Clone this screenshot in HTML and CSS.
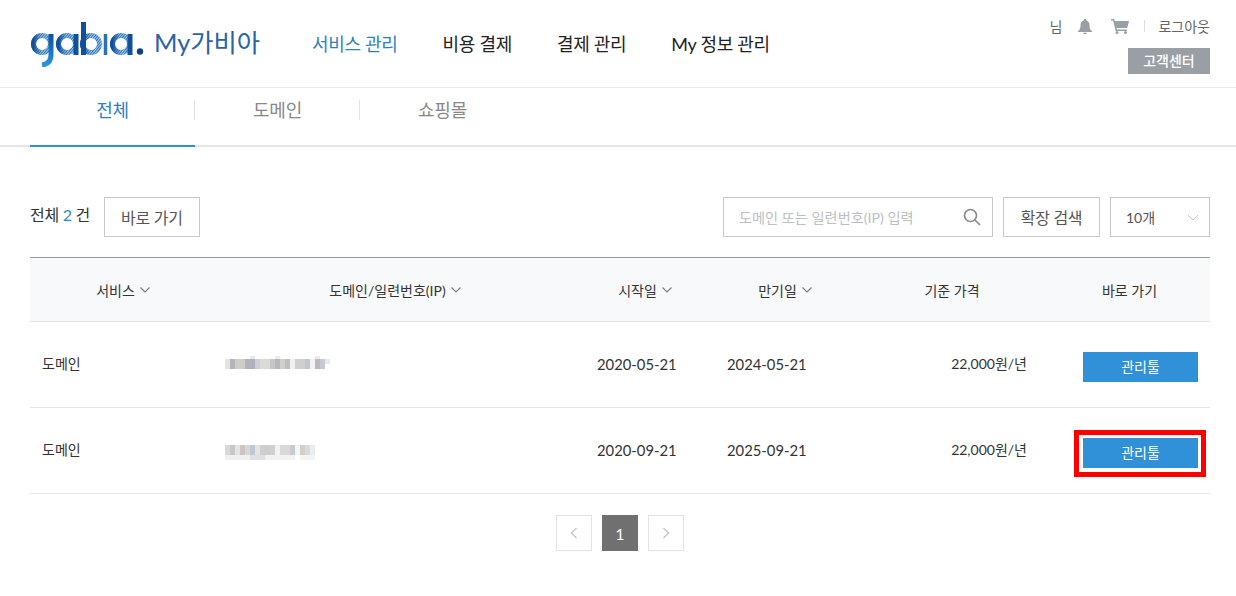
FILE: index.html
```html
<!DOCTYPE html>
<html lang="ko">
<head>
<meta charset="utf-8">
<title>My가비아</title>
<link rel="stylesheet" href="styles.css">
</head>
<body>
<header class="header">
  <div class="brand">
    <svg class="logo" width="114" height="46" viewBox="0 0 114 46" aria-label="gabia">
      <defs>
        <pattern id="weave" width="2" height="2" patternUnits="userSpaceOnUse" patternTransform="rotate(40)">
          <rect width="2" height="2" fill="#2a72b8"/>
          <rect width="1" height="2" fill="#a8cdec"/>
        </pattern>
        <linearGradient id="ringFade" x1="0" y1="0" x2="1" y2="0">
          <stop offset="0" stop-color="#0f4f9c"/>
          <stop offset=".45" stop-color="#0f4f9c" stop-opacity="0"/>
        </linearGradient>
        <linearGradient id="tail" x1="0" y1="0" x2="0" y2="1">
          <stop offset="0" stop-color="#0f4f9c"/>
          <stop offset="1" stop-color="#2b93d8"/>
        </linearGradient>
      </defs>
      <g fill="none" stroke-width="5">
        <g stroke="url(#weave)">
          <circle cx="12" cy="23" r="8.500"/>
          <circle cx="37" cy="23" r="8.500"/>
          <circle cx="61" cy="23" r="8.500"/>
          <circle cx="91" cy="23" r="8.500"/>
        </g>
        <g stroke="url(#ringFade)">
          <circle cx="12" cy="23" r="8.500"/>
          <circle cx="37" cy="23" r="8.500"/>
          <circle cx="61" cy="23" r="8.500"/>
          <circle cx="91" cy="23" r="8.500"/>
        </g>
        <path d="M21 13V34Q21 43 12 44" stroke="url(#tail)"/>
        <path d="M46 13V34" stroke="#0f4f9c"/>
        <path d="M53.500 1V34" stroke="#0f4f9c"/>
        <path d="M75.500 13V34" stroke="#2a72b8" stroke-width="3.500"/>
        <path d="M100 13V34" stroke="#0f4f9c"/>
      </g>
      <circle cx="110" cy="30.500" r="3.200" fill="#103f84"/>
    </svg>
    <span class="brand-name">My가비아</span>
  </div>
  <nav class="nav">
    <a class="nav-item nav-item-active">서비스 관리</a>
    <a class="nav-item">비용 결제</a>
    <a class="nav-item">결제 관리</a>
    <a class="nav-item">My 정보 관리</a>
  </nav>
  <div class="util">
    <div class="util-top">
      <span class="util-user">님</span>
      <svg class="icon-bell" width="14" height="15" viewBox="0 0 14 15"><path d="M7 0a1.300 1.300 0 0 1 1.300 1.500C10.500 2.200 11.500 4 11.500 6.500c0 3 .8 4.500 2.500 5.700V13H0v-.8C1.700 11 2.500 9.500 2.500 6.500 2.500 4 3.500 2.200 5.700 1.500A1.300 1.300 0 0 1 7 0zM5 13.700h4A2 1.400 0 0 1 5 13.700z" fill="#9a9ea5"/></svg>
      <svg class="icon-cart" width="18" height="15" viewBox="0 0 18 15"><path d="M0 0h3.200l.6 2H18l-1.800 7H5.600l.4 1.500h10V12H4.700L2.100 1.500H0z" fill="#9a9ea5"/><circle cx="6" cy="13.500" r="1.500" fill="#9a9ea5"/><circle cx="14.500" cy="13.500" r="1.500" fill="#9a9ea5"/></svg>
      <span class="util-sep"></span>
      <a class="util-logout">로그아웃</a>
    </div>
    <a class="support">고객센터</a>
  </div>
</header>

<div class="tabs">
  <a class="tab tab-active">전체</a>
  <a class="tab">도메인</a>
  <a class="tab tab-last">쇼핑몰</a>
</div>

<main class="main">
  <div class="toolbar">
    <div class="count">전체 <b class="count-num">2</b> 건</div>
    <button class="btn btn-go">바로 가기</button>
    <div class="search">
      <span class="search-text">도메인 또는 일련번호(IP) 입력</span>
      <svg width="18" height="18" viewBox="0 0 18 18" fill="none" stroke="#8a8a8a" stroke-width="1.700"><circle cx="7.500" cy="7.500" r="6"/><path d="M12 12l5 5"/></svg>
    </div>
    <button class="btn btn-adv">확장 검색</button>
    <div class="select">
      <span>10개</span>
      <svg width="12" height="7" viewBox="0 0 12 7" fill="none" stroke="#c4c7cc" stroke-width="1"><path d="M1 1l5 5 5-5"/></svg>
    </div>
  </div>

  <div class="table">
    <div class="row row-head">
      <div class="th th-service">서비스<svg class="sort" width="10" height="6" viewBox="0 0 10 6"><path d="M.5.500L5 5 9.500.500"/></svg></div>
      <div class="th">도메인/일련번호(IP)<svg class="sort" width="10" height="6" viewBox="0 0 10 6"><path d="M.5.500L5 5 9.500.500"/></svg></div>
      <div class="th">시작일<svg class="sort" width="10" height="6" viewBox="0 0 10 6"><path d="M.5.500L5 5 9.500.500"/></svg></div>
      <div class="th">만기일<svg class="sort" width="10" height="6" viewBox="0 0 10 6"><path d="M.5.500L5 5 9.500.500"/></svg></div>
      <div class="th">기준 가격</div>
      <div class="th th-last">바로 가기</div>
    </div>
    <div class="row">
      <div class="td td-service">도메인</div>
      <div class="td">
        <svg class="blur" width="105" height="15" viewBox="0 0 105 15">
          <g fill="#d9d8d4"><rect y="3" width="5" height="10" fill="#e4e3df"/><rect x="5" y="3" width="5" height="10" fill="#b3b5ba"/><rect x="10" y="3" width="10" height="10" fill="#cfcdc9"/><rect x="20" y="3" width="5" height="10" fill="#b5b4b2"/><rect x="25" y="3" width="5" height="10" fill="#aeb2c0"/><rect x="30" y="3" width="5" height="10" fill="#cdd0d4"/><rect x="35" y="3" width="10" height="10" fill="#dcdad6"/><rect x="45" y="3" width="5" height="10" fill="#c4c6c8"/><rect x="50" y="3" width="5" height="10" fill="#b4b7bc"/><rect x="55" y="3" width="5" height="10" fill="#ced0d0"/><rect x="60" y="3" width="5" height="10" fill="#c2bfba"/><rect x="65" y="3" width="5" height="10" fill="#eef1f4"/><rect x="70" y="3" width="10" height="10" fill="#cfcfd0"/><rect x="80" y="3" width="5" height="10" fill="#c3c6cb"/><rect x="85" y="3" width="5" height="10" fill="#f3f3f3"/><rect x="90" y="3" width="5" height="10" fill="#bfb5ba"/><rect x="95" y="3" width="5" height="10" fill="#c6cad0"/><rect x="100" y="3" width="5" height="5" fill="#e4eaf0"/><rect x="25" width="5" height="3" fill="#e8e8ee"/><rect x="50" width="5" height="3" fill="#ececec"/><rect x="90" width="5" height="3" fill="#eee8ea"/></g>
        </svg>
      </div>
      <div class="td td-start">2020-05-21</div>
      <div class="td td-end">2024-05-21</div>
      <div class="td td-price">22,000원/년</div>
      <div class="td td-action"><button class="tool">관리툴</button></div>
    </div>
    <div class="row">
      <div class="td td-service">도메인</div>
      <div class="td">
        <svg class="blur blur-low" width="90" height="15" viewBox="0 0 90 15">
          <g><rect width="5" height="10" fill="#d9d8d4"/><rect x="5" width="5" height="10" fill="#c8c7c3"/><rect x="10" width="5" height="10" fill="#e2e4e6"/><rect x="15" width="5" height="10" fill="#cbc5c2"/><rect x="20" width="5" height="10" fill="#dad6d0"/><rect x="25" width="5" height="10" fill="#bcc8d6"/><rect x="30" width="5" height="10" fill="#e4e4e8"/><rect x="35" width="10" height="10" fill="#cfcdd0"/><rect x="45" width="5" height="10" fill="#d2d0ce"/><rect x="50" width="5" height="10" fill="#f1f2f2"/><rect x="55" width="10" height="10" fill="#dcd8d8"/><rect x="65" width="5" height="10" fill="#c8ccd2"/><rect x="70" width="5" height="10" fill="#f3f6f8"/><rect x="75" width="5" height="10" fill="#d2cfc8"/><rect x="80" width="5" height="10" fill="#d9dbd9"/><rect x="85" width="5" height="10" fill="#e6eef2"/></g>
          <g fill="#f0f0f0"><rect y="10" width="25" height="5"/><rect x="25" y="10" width="15" height="5" fill="#e0e0e0"/><rect x="40" y="10" width="30" height="5" fill="#f2f2f4"/><rect x="75" y="10" width="15" height="5" fill="#f4f4f4"/></g>
        </svg>
      </div>
      <div class="td td-start">2020-09-21</div>
      <div class="td td-end">2025-09-21</div>
      <div class="td td-price">22,000원/년</div>
      <div class="td td-action"><button class="tool">관리툴<span class="highlight"></span></button></div>
    </div>
  </div>

  <div class="pager">
    <a class="page page-nav"><svg width="8" height="12" viewBox="0 0 8 12" fill="none" stroke="#c3c8d0" stroke-width="1.500"><path d="M6.500 1L1.500 6l5 5"/></svg></a>
    <a class="page page-current">1</a>
    <a class="page page-nav"><svg width="8" height="12" viewBox="0 0 8 12" fill="none" stroke="#c3c8d0" stroke-width="1.500"><path d="M1.500 1l5 5-5 5"/></svg></a>
  </div>
</main>
</body>
</html>
```

FILE: styles.css
```css
* { box-sizing: border-box; }

html, body { margin: 0; padding: 0; }

body {
  font-family: Lato, "Noto Sans CJK KR", "Noto Sans", sans-serif;
  color: #333;
  background: #fff;
  font-size: 14px;
}

.header {
  height: 88px;
  border-bottom: 1px solid #ebebeb;
  padding: 0 26px 0 30px;
  display: flex;
  align-items: center;
}

.brand {
  display: flex;
  align-items: center;
  gap: 10px;
  width: 282px;
}

.logo { margin-top: 1px; }

.brand-name {
  font-size: 25.300px;
  line-height: 40px;
  color: #2a64a6;
  margin-bottom: 3px;
}

.nav {
  display: flex;
  gap: 45px;
  flex: 1;
}

.nav-item {
  font-size: 18px;
  line-height: 26px;
  letter-spacing: -0.3px;
  color: #222;
}

.nav-item-active { color: #2f7fc0; }

.util {
  display: flex;
  flex-direction: column;
  align-items: flex-end;
  gap: 12px;
  margin-top: 3px;
}

.util-top {
  display: flex;
  align-items: center;
  height: 20px;
  font-size: 14px;
  color: #666;
}

.util-user { margin-right: 16px; }
.icon-bell { margin-right: 19px; }
.icon-cart { margin-right: 15px; }

.util-sep {
  width: 1px;
  height: 12px;
  background: #dcdcdc;
  margin-right: 13px;
}

.support {
  width: 82px;
  height: 26px;
  background: #9a9ea5;
  color: #fff;
  font-size: 14px;
  font-weight: 500;
  line-height: 26px;
  text-align: center;
}

.tabs {
  display: flex;
  height: 59px;
  padding: 0 26px 0 30px;
  border-bottom: 2px solid #e5e5e5;
}

.tab {
  position: relative;
  width: 165px;
  height: 59px;
  padding-top: 8px;
  font-size: 18px;
  line-height: 28px;
  letter-spacing: -0.3px;
  color: #888;
  text-align: center;
}

.tab::after {
  content: "";
  position: absolute;
  right: 0;
  top: 12px;
  width: 1px;
  height: 20px;
  background: #e2e2e2;
}

.tab-last::after { display: none; }

.tab-active {
  color: #2f7fc0;
  border-bottom: 2px solid #2f8fd8;
}

.main { padding: 50px 26px 0 30px; }

.toolbar {
  display: flex;
  align-items: center;
  height: 40px;
}

.count {
  font-size: 16px;
  line-height: 22px;
  letter-spacing: -0.3px;
  color: #333;
  margin: 0 14px 4px 0;
}

.count-num {
  font-weight: 400;
  color: #2f86cc;
}

.btn {
  height: 40px;
  background: #fff;
  border: 1px solid #c8c8c8;
  font: inherit;
  font-size: 16px;
  letter-spacing: -0.3px;
  color: #555;
  padding: 0;
}

.btn-go { width: 96px; margin-right: auto; }
.btn-adv { width: 97px; margin-right: 10px; }

.search {
  width: 270px;
  height: 40px;
  border: 1px solid #c8c8c8;
  display: flex;
  align-items: center;
  justify-content: space-between;
  padding: 0 11px 0 15px;
  margin-right: 10px;
}

.search-text {
  font-size: 14.200px;
  color: #bdc0c4;
}

.select {
  width: 100px;
  height: 40px;
  border: 1px solid #c8c8c8;
  display: flex;
  align-items: center;
  justify-content: space-between;
  padding: 0 10px 0 15px;
  font-size: 14px;
  color: #555;
}

.table {
  margin-top: 20px;
  border-top: 1px solid #999;
}

.row {
  display: grid;
  grid-template-columns: 195px 340px 160px 120px 214px 151px;
  height: 86px;
  align-items: center;
  border-bottom: 1px solid #e5e5e5;
}

.row-head {
  height: 64px;
  background: #f8f9fb;
}

.th {
  display: flex;
  align-items: center;
  justify-content: center;
  font-size: 14px;
  color: #333;
}

.th-service { padding-right: 9px; }
.th-last { padding-right: 10px; }

.sort {
  margin-left: 5px;
  fill: none;
  stroke: #808080;
  stroke-width: 1.200;
}

.td {
  font-size: 14px;
  line-height: 20px;
  color: #333;
  display: flex;
  align-items: center;
  padding-bottom: 2px;
}

.td-service { padding-left: 12px; }
.td-start { padding-left: 32px; font-size: 14.800px; }
.td-end { padding-left: 2px; font-size: 14.800px; }
.td-price { justify-content: flex-end; padding-right: 32px; }
.td-action { padding: 4px 0 0 24px; }

.blur { display: block; }
.blur-low { margin-top: 6px; }

.tool {
  position: relative;
  width: 115px;
  height: 30px;
  border: 0;
  padding: 0;
  background: #3090d8;
  color: #fff;
  font: inherit;
  font-size: 14px;
}

.highlight {
  position: absolute;
  left: -9px;
  top: -8px;
  width: 132px;
  height: 47px;
  border: 5px solid #f00;
}

.pager {
  display: flex;
  justify-content: center;
  gap: 10px;
  margin-top: 21px;
}

.page {
  width: 36px;
  height: 36px;
  display: flex;
  align-items: center;
  justify-content: center;
  font-size: 16px;
}

.page-nav { border: 1px solid #e3e3e3; }

.page-current {
  background: #707070;
  color: #fff;
}
```
